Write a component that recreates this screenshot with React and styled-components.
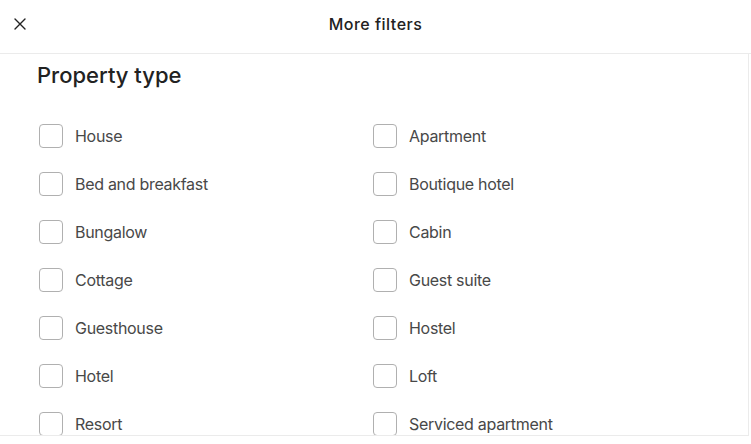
import React from "react";
import styled, { createGlobalStyle } from "styled-components";

const Global = createGlobalStyle`
  html, body { margin: 0; padding: 0; background: #fff; }
  body { font-family: Inter, "Noto Sans", sans-serif; color: #222; }
  * { box-sizing: border-box; }
`;

const Page = styled.div`
  width: 751px;
  height: 444px;
  display: flex;
  flex-direction: column;
  overflow: hidden;
`;

const Header = styled.header`
  height: 54px;
  flex: none;
  display: grid;
  grid-template-columns: 40px 1fr 40px;
  align-items: center;
  border-bottom: 1px solid #ebebeb;
`;

const CloseButton = styled.button`
  width: 40px;
  height: 40px;
  margin-top: -6px;
  padding: 0;
  border: none;
  background: none;
  display: flex;
  align-items: center;
  justify-content: center;
  cursor: pointer;
`;

const Title = styled.h1`
  margin: 0;
  margin-top: -6px;
  text-align: center;
  font-size: 16px;
  font-weight: 500;
  color: #222;
  letter-spacing: 0.5px;
`;

const Body = styled.div`
  width: 749px;
  height: 382px;
  flex: none;
  border-right: 1px solid #ebebeb;
  border-bottom: 1px solid #ebebeb;
  overflow: hidden;
  padding: 7px 0 0 37px;
`;

const Heading = styled.h2`
  margin: 0;
  font-size: 22px;
  font-weight: 500;
  color: #222;
  line-height: 28px;
`;

const Grid = styled.div`
  margin-top: 23px;
  display: grid;
  grid-template-columns: 334px 334px;
  grid-auto-rows: 48px;
  padding-left: 2px;
`;

const Option = styled.label`
  display: flex;
  align-items: center;
  gap: 12px;
  font-size: 16px;
  letter-spacing: -0.3px;
  color: #484848;
  cursor: pointer;
`;

const Box = styled.span`
  width: 24px;
  height: 24px;
  flex: none;
  border: 1px solid #b0b0b0;
  border-radius: 4px;
  background: #fff;
`;

const left = ["House", "Bed and breakfast", "Bungalow", "Cottage", "Guesthouse", "Hotel", "Resort"];
const right = ["Apartment", "Boutique hotel", "Cabin", "Guest suite", "Hostel", "Loft", "Serviced apartment"];

export default function App() {
  const items = [];
  left.forEach((l, i) => {
    items.push(l, right[i]);
  });
  return (
    <Page>
      <Global />
      <Header>
        <CloseButton aria-label="Close">
          <svg width="12" height="12" viewBox="0 0 12 12" fill="none" stroke="#222" strokeWidth="1.4" strokeLinecap="round">
            <path d="M1 1 L11 11 M11 1 L1 11" />
          </svg>
        </CloseButton>
        <Title>More filters</Title>
        <span />
      </Header>
      <Body>
        <Heading>Property type</Heading>
        <Grid>
          {items.map((t) => (
            <Option key={t}>
              <Box />
              {t}
            </Option>
          ))}
        </Grid>
      </Body>
    </Page>
  );
}
